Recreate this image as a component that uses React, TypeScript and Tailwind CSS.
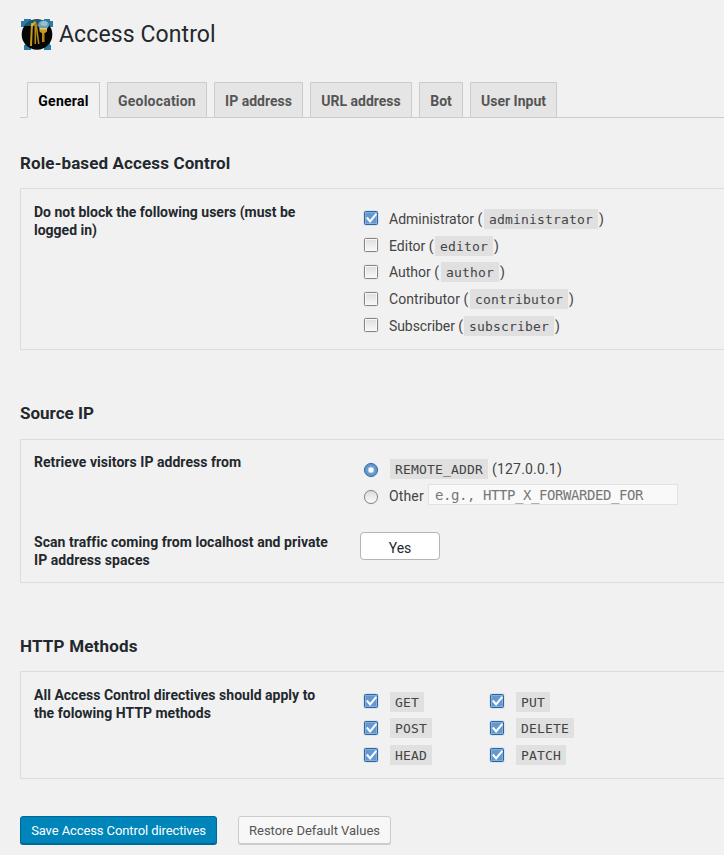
import React from "react";

const mono = "font-['DejaVu_Sans_Mono',monospace]";

function Logo() {
  return (
    <svg width="34" height="34" viewBox="0 0 34 34" className="shrink-0">
      <path d="M4 2h7v2h13V2h6v2h3v6h-3v18h1v5h-7v-3H11v3H4v-5h1V10H1V4h3z" fill="#2a7ba3" />
      <circle cx="17" cy="17.5" r="15.3" fill="#050505" />
      <path d="M5 8l5-5h14l6 6H5z" fill="#236a8e" opacity=".8" />
      <path d="M11 6h2l-1 23h-2z" fill="#c9971a" />
      <path d="M15 4l-4 4 1 2 4-4z" fill="#e0b52c" />
      <path d="M14.500 6h2l-.5 21h-1.500z" fill="#b48a14" />
      <path d="M17 7l2.500 20h-1.500l-2.500-18z" fill="#b48a14" />
      <ellipse cx="23.500" cy="8" rx="5.500" ry="4.500" fill="#6e9db6" />
      <ellipse cx="24" cy="6.500" rx="3.500" ry="2.500" fill="#98bfd2" />
      <path d="M19.500 11.500h7.500v3l-2 1.500h-3.500l-2-1.500z" fill="#c99a1b" />
      <path d="M19.500 11h7.500v1.500h-7.500z" fill="#e0c97e" />
      <path d="M22 16h2.500v9H22z" fill="#b48a14" />
    </svg>
  );
}

function Check({ on = false, className = "" }: { on?: boolean; className?: string }) {
  return (
    <svg width="16" height="16" viewBox="0 0 16 16" className={`-ml-px shrink-0 ${className}`}>
      <defs>
        <linearGradient id="box" x1="0" y1="0" x2="0" y2="1">
          <stop offset="0" stopColor="#dcdcdc" />
          <stop offset="1" stopColor="#fafafa" />
        </linearGradient>
      </defs>
      <rect x=".5" y=".5" width="15" height="15" rx="2" fill="none" stroke={on ? "#dde3ea" : "#e8e8e8"} />
      <rect x="1.5" y="1.5" width="13" height="13" rx="1" fill={on ? "#6498cf" : "url(#box)"} stroke={on ? "#2f659f" : "#858585"} />
      <rect x="2.5" y="2.5" width="11" height="11" fill="none" stroke={on ? "#86b0dc" : "#f8f8f8"} />
      {on && <path d="M3.8 7.5l3.3 4L13.3 3.8" fill="none" stroke="#fff" strokeWidth="2" />}
    </svg>
  );
}

function Radio({ on = false }: { on?: boolean }) {
  return (
    <svg width="16" height="16" viewBox="0 0 16 16" className="-ml-px mt-[3px] shrink-0">
      <defs>
        <linearGradient id="dot" x1="0" y1="0" x2="0" y2="1">
          <stop offset="0" stopColor="#dcdcdc" />
          <stop offset="1" stopColor="#fcfcfc" />
        </linearGradient>
      </defs>
      <circle cx="8" cy="8" r="7.6" fill="#e1e3e6" />
      <circle cx="8" cy="8" r="6.5" fill={on ? "#6498cf" : "url(#dot)"} stroke={on ? "#38699f" : "#858585"} />
      {on && <circle cx="8" cy="8" r="3" fill="#fff" stroke="#a9c8e8" />}
    </svg>
  );
}

function Code({ children, className = "" }: { children: React.ReactNode; className?: string }) {
  return (
    <code className={`h-5 shrink-0 bg-[#e0e0e0] px-[5px] text-[13px] leading-[21px] tracking-[0.174px] text-[#444] ${mono} ${className}`}>
      {children}
    </code>
  );
}

function Heading({ children, className }: { children: React.ReactNode; className: string }) {
  return <h2 className={`text-[17px] font-bold leading-6 text-[#23282d] ${className}`}>{children}</h2>;
}

function Panel({ children, className }: { children: React.ReactNode; className: string }) {
  return <section className={`border border-r-0 border-[#dcdcdc] ${className}`}>{children}</section>;
}

function Label({ children, className = "" }: { children: React.ReactNode; className?: string }) {
  return (
    <div className={`w-[330px] shrink-0 whitespace-nowrap pl-[13px] text-[14px] font-bold leading-[18px] text-[#23282d] ${className}`}>
      {children}
    </div>
  );
}

const tabs = [
  { name: "General", width: "w-[73px] tracking-[0.25px]" },
  { name: "Geolocation", width: "w-[100px] tracking-[0.2px]" },
  { name: "IP address", width: "w-[89px]" },
  { name: "URL address", width: "w-[102px]" },
  { name: "Bot", width: "w-[44px]" },
  { name: "User Input", width: "w-[87px]" },
];

const roles = [
  { name: "Administrator", code: "administrator", row: "h-[27px]", box: "mt-px", gap: "w-[95px]" },
  { name: "Editor", code: "editor", row: "h-[26px]", box: "mt-px", gap: "w-[46px]" },
  { name: "Author", code: "author", row: "h-[27px]", box: "mt-[2px]", gap: "w-[52px]" },
  { name: "Contributor", code: "contributor", row: "h-[27px]", box: "mt-[2px]", gap: "w-[81px] tracking-[0.06px]" },
  { name: "Subscriber", code: "subscriber", row: "h-5", box: "mt-px", gap: "w-[75px] tracking-[-0.08px]" },
];

const methods = [
  { left: "GET", right: "PUT", row: "h-[26px]", box: "mt-px" },
  { left: "POST", right: "DELETE", row: "h-[27px]", box: "mt-[2px]" },
  { left: "HEAD", right: "PATCH", row: "h-5", box: "mt-[2px]" },
];

export default function App() {
  return (
    <div className="h-[855px] w-[724px] overflow-hidden bg-[#f1f1f1] pl-5 font-[Roboto,sans-serif] text-[14px] text-[#444]">
      <header className="flex h-[82px] pt-[17px]">
        <Logo />
        <h1 className="ml-[5px] pt-px text-[23px] leading-[34px] tracking-[0.1px] text-[#23282d]">Access Control</h1>
      </header>

      <nav className="flex h-9 items-start gap-[7px] border-b border-[#ccc] pl-[7px]">
        {tabs.map((t, i) => (
          <a
            key={t.name}
            className={`h-9 shrink-0 whitespace-nowrap border border-[#ccc] pt-[6px] text-center text-[14px] font-bold leading-6 ${t.width} ${
              i === 0 ? "border-b-[#f1f1f1] bg-[#f1f1f1] text-black" : "bg-[#e5e5e5] text-[#555]"
            }`}
          >
            {t.name}
          </a>
        ))}
      </nav>

      <Heading className="mt-[33px] tracking-[0.12px]">Role-based Access Control</Heading>
      <Panel className="mt-[13px] flex h-[162px]">
        <Label className="pt-[14px]">
          Do not block the following users (must be
          <br />
          logged in)
        </Label>
        <div className="ml-[13px] pt-5">
          {roles.map((r) => (
            <div key={r.code} className={`flex ${r.row}`}>
              <Check on={r.name === "Administrator"} className={r.box} />
              <span className={`ml-[10px] shrink-0 whitespace-nowrap leading-5 ${r.gap}`}>{r.name} (</span>
              <Code>{r.code}</Code>
              <span className="ml-px leading-5">)</span>
            </div>
          ))}
        </div>
      </Panel>

      <Heading className="mt-[51px]">Source IP</Heading>
      <Panel className="mt-[14px] h-[144px]">
        <div className="flex h-[92px]">
          <Label className="pt-[13px] tracking-[0.04px]">Retrieve visitors IP address from</Label>
          <div className="ml-[13px] pt-[19px]">
            <div className="flex h-[25px]">
              <Radio on />
              <Code className="ml-[11px]">REMOTE_ADDR</Code>
              <span className="ml-1 leading-5 tracking-[0.18px]">(127.0.0.1)</span>
            </div>
            <div className="flex">
              <div className="pt-[2px]">
                <Radio />
              </div>
              <span className="ml-[10px] w-[39px] pt-[2px] leading-5 tracking-[0.15px]">Other</span>
              <div
                role="textbox"
                className={`h-[21px] w-[250px] whitespace-nowrap border border-[#e2e2e2] bg-[#f9f9f9] px-[6px] text-[14px] leading-[21px] tracking-[-0.43px] text-[#777] ${mono}`}
              >
                e.g., HTTP_X_FORWARDED_FOR
              </div>
            </div>
          </div>
        </div>
        <div className="flex">
          <Label className="pt-px tracking-[0.05px]">
            Scan traffic coming from localhost and private
            <br />
            IP address spaces
          </Label>
          <button className="ml-[9px] h-7 w-20 rounded-[4px] border border-[#b4b4b4] bg-white pt-[4px] leading-[22px] text-[#23282d]">Yes</button>
        </div>
      </Panel>

      <Heading className="mt-[51px] tracking-[0.2px]">HTTP Methods</Heading>
      <Panel className="mt-[13px] flex h-[108px]">
        <Label className="pt-[14px] tracking-[0.02px]">
          All Access Control directives should apply to
          <br />
          the folowing HTTP methods
        </Label>
        <div className="ml-[13px] pt-5">
          {methods.map((m) => (
            <div key={m.left} className={`flex ${m.row}`}>
              <div className="flex w-[126px]">
                <Check on className={m.box} />
                <Code className="ml-[11px]">{m.left}</Code>
              </div>
              <Check on className={m.box} />
              <Code className="ml-[11px]">{m.right}</Code>
            </div>
          ))}
        </div>
      </Panel>

      <div className="mt-[37px] flex gap-[21px] text-[13px]">
        <button className="h-7 w-[197px] rounded-[3px] border border-[#006799] bg-[#0085ba] pt-px leading-[26px] tracking-[-0.1px] text-white shadow-[0_1px_0_#006799]">
          Save Access Control directives
        </button>
        <button className="h-7 w-[153px] rounded-[3px] border border-[#ccc] bg-[#f7f7f7] pt-px leading-[26px] tracking-[-0.02px] text-[#555] shadow-[0_1px_0_#ccc]">
          Restore Default Values
        </button>
      </div>
    </div>
  );
}
